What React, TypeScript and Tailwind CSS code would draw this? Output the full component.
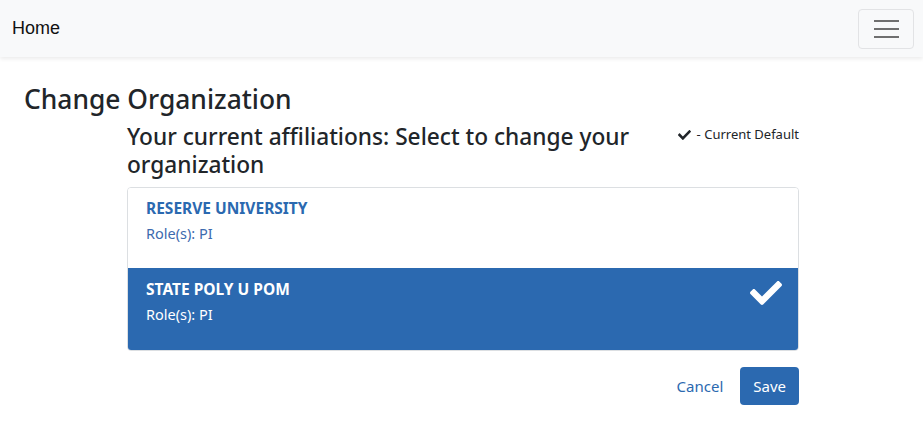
import React from "react";

const CheckIcon = ({ className }: { className?: string }) => (
  <svg viewBox="0 64 512 384" className={className} fill="currentColor" preserveAspectRatio="none">
    <path d="M173.898 439.404l-166.4-166.4c-9.997-9.997-9.997-26.206 0-36.204l36.203-36.204c9.997-9.998 26.207-9.998 36.204 0L192 312.69 432.095 72.596c9.997-9.997 26.207-9.997 36.204 0l36.203 36.204c9.997 9.997 9.997 26.206 0 36.204l-294.4 294.401c-9.998 9.997-26.207 9.997-36.204-.001z" />
  </svg>
);

export default function App() {
  return (
    <div className="min-h-screen bg-white text-[#212529]" style={{ fontFamily: '"Noto Sans", "Open Sans", sans-serif' }}>
      <nav className="flex h-[57px] items-center justify-between bg-[#f8f9fa] pl-3 pr-[9px] shadow-[0_2px_4px_rgba(0,0,0,0.08)]">
        <span className="text-[18px] text-[#111]" style={{ fontFamily: '"Liberation Sans", Arial, sans-serif' }}>Home</span>
        <button className="flex h-[40px] w-[56px] flex-col items-center justify-center gap-[6px] rounded-[4px] border border-[#e2e3e5]">
          <span className="block h-[2px] w-[25px] bg-[#6f6f6f]" />
          <span className="block h-[2px] w-[25px] bg-[#6f6f6f]" />
          <span className="block h-[2px] w-[25px] bg-[#6f6f6f]" />
        </button>
      </nav>
      <main className="px-6 pt-[24px]">
        <h1 className="text-[26.4px] font-medium leading-[36px]">Change Organization</h1>
        <div className="ml-[103px] w-[672px]">
          <div className="mt-[6px] flex items-start justify-between">
            <h2 className="w-[530px] text-[22.7px] font-medium leading-[28px]">
              Your current affiliations: Select to change your organization
            </h2>
            <div className="mt-[2px] flex items-center text-[13px]">
              <CheckIcon className="mr-[6px] h-[10px] w-[13px] text-[#212529]" />
              <span>- Current Default</span>
            </div>
          </div>
          <div className="mt-[8px] overflow-hidden rounded-[4px] border border-[#dcdfe2]">
            <div className="h-[80px] bg-white px-[18px] pt-[10px]">
              <div className="text-[15.5px] font-bold leading-[21px] text-[#2b69b0]">RESERVE UNIVERSITY</div>
              <div className="mt-[4px] text-[14.5px] leading-[20px] text-[#3d6aae]">Role(s): PI</div>
            </div>
            <div className="relative h-[82px] bg-[#2b69b0] px-[18px] pt-[11px] text-white">
              <div className="text-[15.5px] font-bold leading-[21px]">STATE POLY U POM</div>
              <div className="mt-[4px] text-[14.5px] leading-[20px]">Role(s): PI</div>
              <CheckIcon className="absolute right-[16px] top-[13px] h-[24px] w-[32px]" />
            </div>
          </div>
          <div className="mt-[16px] flex items-center justify-end gap-[17px]">
            <span className="text-[15px] text-[#2b69b0]">Cancel</span>
            <button className="h-[38px] rounded-[4px] bg-[#2b69b0] px-[13px] text-[15px] text-white">Save</button>
          </div>
        </div>
      </main>
    </div>
  );
}
